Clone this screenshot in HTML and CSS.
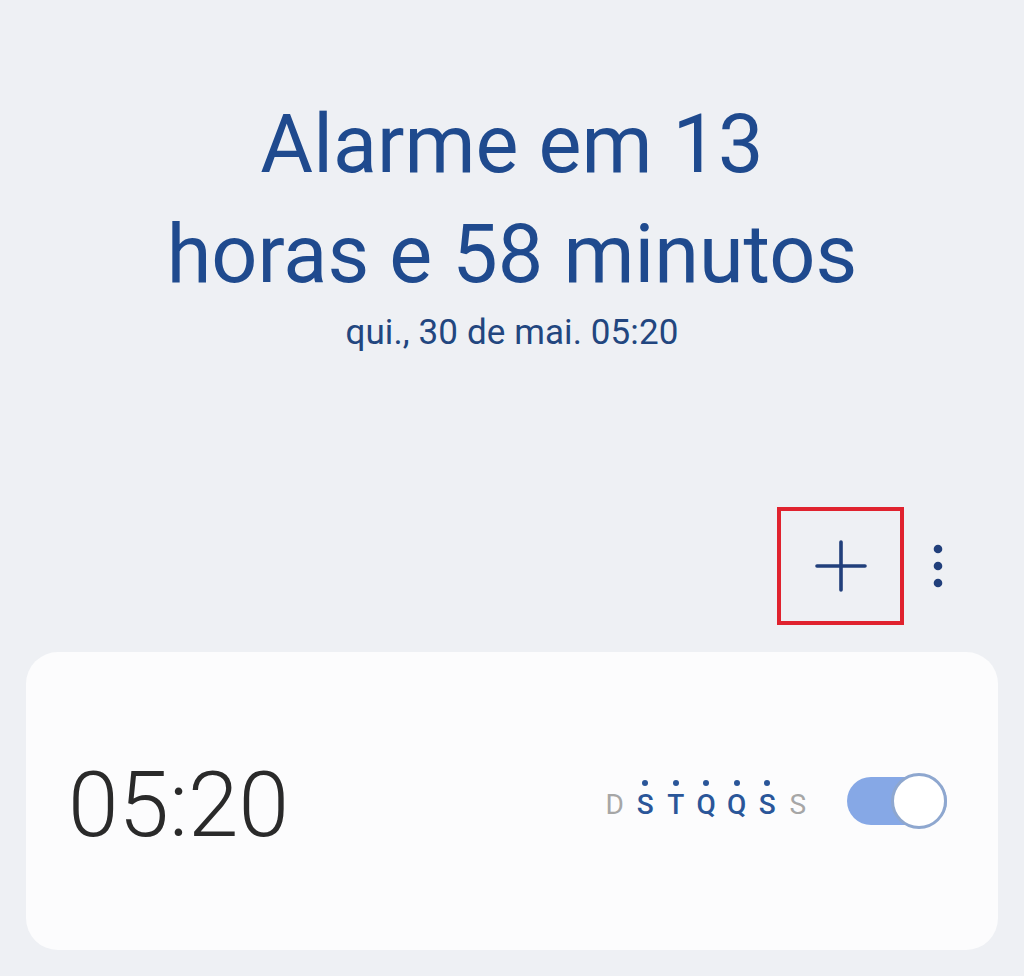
FILE: index.html
```html
<!DOCTYPE html>
<html lang="pt">
<head>
<meta charset="utf-8">
<title>Alarme</title>
<link rel="stylesheet" href="styles.css">
</head>
<body>
<main class="page">
  <section class="summary">
    <h1 class="summary-title">Alarme em 13<br>horas e 58 minutos</h1>
    <p class="summary-date">qui., 30 de mai. 05:20</p>
  </section>

  <div class="toolbar">
    <button class="tool-btn add-btn" aria-label="Adicionar alarme">
      <svg width="52" height="52" viewBox="0 0 52 52" aria-hidden="true">
        <path d="M26 2 V50 M2 26 H50" stroke="#213f7b" stroke-width="3.6" stroke-linecap="round" fill="none"/>
      </svg>
    </button>
    <button class="tool-btn more-btn" aria-label="Mais opções">
      <svg width="10" height="44" viewBox="0 0 10 44" aria-hidden="true">
        <circle cx="5" cy="5" r="4.3" fill="#213f7b"/>
        <circle cx="5" cy="22" r="4.3" fill="#213f7b"/>
        <circle cx="5" cy="39" r="4.3" fill="#213f7b"/>
      </svg>
    </button>
  </div>

  <article class="alarm-card">
    <div class="alarm-time">05:20</div>
    <div class="alarm-right">
      <ul class="days">
        <li class="day">D</li>
        <li class="day on">S</li>
        <li class="day on">T</li>
        <li class="day on">Q</li>
        <li class="day on">Q</li>
        <li class="day on">S</li>
        <li class="day">S</li>
      </ul>
      <div class="switch" role="switch" aria-checked="true">
        <span class="switch-thumb"></span>
      </div>
    </div>
  </article>
</main>
</body>
</html>
```

FILE: styles.css
```css
* { box-sizing: border-box; }

html, body {
  margin: 0;
  padding: 0;
  background: #eef0f4;
}

body {
  font-family: Roboto, "Noto Sans", "Liberation Sans", sans-serif;
}

.page {
  width: 1024px;
  height: 976px;
  overflow: hidden;
  display: flex;
  flex-direction: column;
}

.summary {
  margin-top: 90px;
  display: flex;
  flex-direction: column;
  align-items: center;
  text-align: center;
}

.summary-title {
  margin: 0;
  font-size: 81px;
  line-height: 110px;
  font-weight: 400;
  color: #1f4a8e;
  letter-spacing: 0;
}

.summary-date {
  margin: 3px 0 0;
  font-size: 35px;
  line-height: 40px;
  color: #22467f;
  letter-spacing: 0.1px;
}

.toolbar {
  margin-top: 154px;
  display: flex;
  justify-content: flex-end;
  align-items: center;
  padding-right: 52px;
}

.tool-btn {
  border: 0;
  background: transparent;
  padding: 0;
  margin: 0;
  display: flex;
  align-items: center;
  justify-content: center;
  cursor: pointer;
}

.add-btn {
  width: 127px;
  height: 118px;
  border: 4px solid #e0222e;
}

.more-btn {
  width: 68px;
  height: 118px;
}

.alarm-card {
  margin: 27px 26px 0;
  height: 298px;
  background: #fcfcfd;
  border-radius: 32px;
  display: flex;
  align-items: center;
  justify-content: space-between;
  padding: 0 51px 0 42px;
}

.alarm-time {
  font-size: 91px;
  font-weight: 300;
  color: #2a2a2a;
  line-height: 1;
  margin-top: 8px;
}

.alarm-right {
  display: flex;
  align-items: center;
  gap: 34px;
}

.days {
  list-style: none;
  margin: 0;
  padding: 0;
  display: flex;
  margin-top: 8px;
}

.day {
  position: relative;
  width: 30.5px;
  text-align: center;
  font-size: 28px;
  line-height: 30px;
  color: #a6a6a6;
  font-weight: 400;
}

.day.on {
  color: #2a5699;
  font-weight: 500;
}

.day.on::before {
  content: "";
  position: absolute;
  left: 50%;
  top: -10px;
  width: 6px;
  height: 6px;
  margin-left: -3px;
  border-radius: 50%;
  background: #2a5699;
}

.switch {
  position: relative;
  width: 100px;
  height: 48px;
  border-radius: 24px;
  background: #86a8e6;
}

.switch-thumb {
  position: absolute;
  right: 0;
  top: -4px;
  width: 56px;
  height: 56px;
  border-radius: 50%;
  background: #ffffff;
  border: 3px solid #8ea7cf;
}
```
